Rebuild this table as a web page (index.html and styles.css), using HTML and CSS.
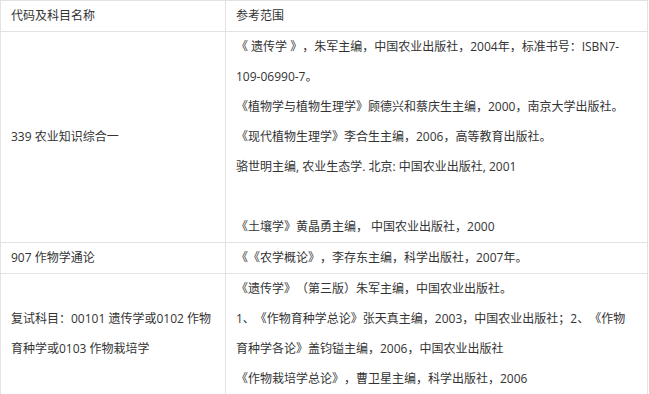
FILE: index.html
```html
<!DOCTYPE html>
<html lang="zh-CN">
<head>
<meta charset="utf-8">
<title>参考书目</title>
<link rel="stylesheet" href="styles.css">
</head>
<body>
<table class="ref-table">
  <colgroup>
    <col class="col-name">
    <col class="col-ref">
  </colgroup>
  <thead>
    <tr>
      <th>代码及科目名称</th>
      <th>参考范围</th>
    </tr>
  </thead>
  <tbody>
    <tr>
      <td class="subject">339 农业知识综合一</td>
      <td>
        <p>《 遗传学 》，朱军主编，中国农业出版社，2004年，标准书号：ISBN7-109-06990-7。</p>
        <p>《植物学与植物生理学》顾德兴和蔡庆生主编，2000，南京大学出版社。</p>
        <p>《现代植物生理学》李合生主编，2006，高等教育出版社。</p>
        <p>骆世明主编, 农业生态学. 北京: 中国农业出版社, 2001</p>
        <p>&nbsp;</p>
        <p>《土壤学》黄晶勇主编， 中国农业出版社，2000</p>
      </td>
    </tr>
    <tr>
      <td class="subject">907 作物学通论</td>
      <td>
        <p>《《农学概论》，李存东主编，科学出版社，2007年。</p>
      </td>
    </tr>
    <tr>
      <td class="subject">复试科目：00101 遗传学或0102 作物育种学或0103 作物栽培学</td>
      <td>
        <p>《遗传学》（第三版）朱军主编，中国农业出版社。</p>
        <p>1、《作物育种学总论》张天真主编，2003，中国农业出版社；2、《作物育种学各论》盖钧镒主编，2006，中国农业出版社</p>
        <p>《作物栽培学总论》，曹卫星主编，科学出版社，2006</p>
      </td>
    </tr>
  </tbody>
</table>
</body>
</html>
```
FILE: styles.css
```css
html, body {
  margin: 0;
  padding: 0;
  background: #ffffff;
}

body {
  font-family: "Open Sans", "Noto Sans CJK SC", sans-serif;
  font-size: 12px;
  line-height: 30px;
  color: #333333;
  text-spacing-trim: space-all;
}

.ref-table {
  border-collapse: collapse;
  table-layout: fixed;
  width: 648px;
}

.col-name {
  width: 225px;
}

.ref-table th,
.ref-table td {
  border: 1px solid #e3e3e3;
  padding: 0 10px;
  text-align: left;
  vertical-align: middle;
  font-weight: normal;
}

.ref-table p {
  margin: 0;
}
```
